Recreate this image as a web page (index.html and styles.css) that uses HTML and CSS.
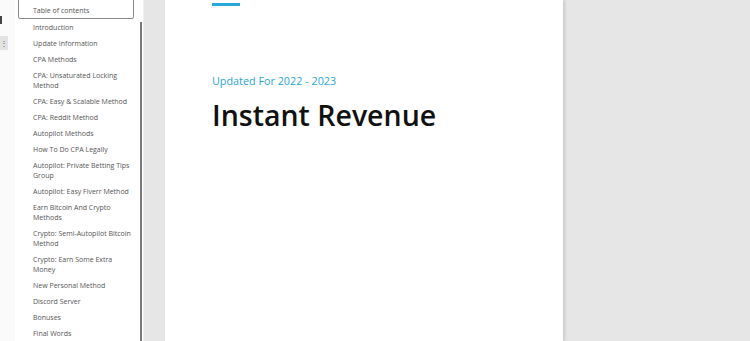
FILE: index.html
```html
<!DOCTYPE html>
<html lang="en">
<head>
    <meta charset="UTF-8">
    <meta name="viewport" content="width=device-width, initial-scale=1.0">
    <title>Instant Revenue</title>
    <link rel="stylesheet" href="styles.css">
</head>
<body>

<div class="app">
    <div class="rail">
        <span class="rail-mark"></span>
        <span class="rail-btn">&#8942;</span>
    </div>

    <aside class="sidebar">
        <div class="toc-title">Table of contents</div>
        <ul class="toc">
            <li>Introduction</li>
            <li>Update Information</li>
            <li>CPA Methods</li>
            <li>CPA: Unsaturated Locking Method</li>
            <li>CPA: Easy &amp; Scalable Method</li>
            <li>CPA: Reddit Method</li>
            <li>Autopilot Methods</li>
            <li>How To Do CPA Legally</li>
            <li>Autopilot: Private Betting Tips Group</li>
            <li>Autopilot: Easy Fiverr Method</li>
            <li>Earn Bitcoin And Crypto Methods</li>
            <li>Crypto: Semi-Autopilot Bitcoin Method</li>
            <li>Crypto: Earn Some Extra Money</li>
            <li>New Personal Method</li>
            <li>Discord Server</li>
            <li>Bonuses</li>
            <li>Final Words</li>
        </ul>
    </aside>
    <div class="scrollbar"><div class="thumb"></div></div>

    <main class="viewer">
        <div class="page">
            <div class="accent"></div>
            <p class="subtitle">Updated For 2022 - 2023</p>
            <h1 class="title">Instant Revenue</h1>
        </div>
    </main>
</div>

</body>
</html>
```

FILE: styles.css
```css
body {
    margin: 0;
    font-family: "Open Sans", "Noto Sans", sans-serif;
    background-color: #e6e6e6;
    overflow: hidden;
}
.app {
    display: flex;
    height: 341px;
    overflow: hidden;
}
.rail {
    width: 15px;
    background-color: #fafafa;
    display: flex;
    flex-direction: column;
    align-items: flex-start;
    flex-shrink: 0;
}
.rail-mark {
    width: 2px;
    height: 8px;
    margin-top: 16px;
    background-color: #444;
}
.rail-btn {
    width: 8px;
    height: 14px;
    margin-top: 12px;
    background-color: #e3e3e3;
    color: #555;
    font-size: 8px;
    line-height: 14px;
    text-align: center;
}
.sidebar {
    width: 125px;
    background-color: #fff;
    flex-shrink: 0;
    overflow: hidden;
}
.toc-title {
    margin: -5px 6px 0 3px;
    height: 24px;
    border: 1px solid #8a8a8a;
    border-radius: 2px;
    box-sizing: border-box;
    padding: 0 0 0 14px;
    font-size: 7px;
    line-height: 30px;
    color: #555;
}
.toc {
    list-style: none;
    margin: 0;
    padding: 1px 9px 0 18px;
}
.toc li {
    font-size: 7px;
    line-height: 10px;
    color: #555;
    padding: 3px 0;
}
.scrollbar {
    width: 3px;
    background-color: #fff;
    flex-shrink: 0;
    display: flex;
}
.thumb {
    width: 2px;
    margin-top: 22px;
    background-color: #7a7a7a;
}
.viewer {
    flex: 1;
    padding-left: 21px;
    border-left: 1px solid #f0f0f0;
    display: flex;
}
.page {
    width: 398px;
    background-color: #fff;
    padding: 3px 0 0 47px;
    box-sizing: border-box;
    box-shadow: 2px 0 3px rgba(0, 0, 0, 0.12);
}
.accent {
    width: 28px;
    height: 3px;
    background-color: #29a8dc;
}
.subtitle {
    margin: 67px 0 0;
    font-size: 10.8px;
    line-height: 16px;
    color: #2aa5d6;
}
.title {
    margin: 8px 0 0;
    font-size: 28.5px;
    line-height: 36px;
    font-weight: 600;
    color: #111;
}
```
